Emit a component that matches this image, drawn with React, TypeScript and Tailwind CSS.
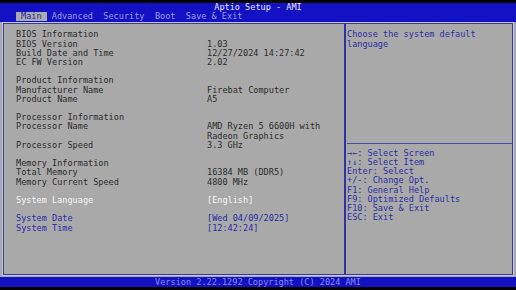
import React from 'react';

type Row = { label: string; value?: string[]; tone?: 'head' | 'item' | 'sel' | 'link' } | null;

const rows: Row[] = [
  { label: 'BIOS Information', tone: 'head' },
  { label: 'BIOS Version', value: ['1.03'] },
  { label: 'Build Date and Time', value: ['12/27/2024 14:27:42'] },
  { label: 'EC FW Version', value: ['2.02'] },
  null,
  { label: 'Product Information', tone: 'head' },
  { label: 'Manufacturer Name', value: ['Firebat Computer'] },
  { label: 'Product Name', value: ['A5'] },
  null,
  { label: 'Processor Information', tone: 'head' },
  { label: 'Processor Name', value: ['AMD Ryzen 5 6600H with', 'Radeon Graphics'] },
  { label: 'Processor Speed', value: ['3.3 GHz'] },
  null,
  { label: 'Memory Information', tone: 'head' },
  { label: 'Total Memory', value: ['16384 MB (DDR5)'] },
  { label: 'Memory Current Speed', value: ['4800 MHz'] },
  null,
  { label: 'System Language', value: ['[English]'], tone: 'sel' },
  null,
  { label: 'System Date', value: ['[Wed 04/09/2025]'], tone: 'link' },
  { label: 'System Time', value: ['[12:42:24]'], tone: 'link' },
];

const keys = [
  '\u2192\u2190: Select Screen',
  '\u2191\u2193: Select Item',
  'Enter: Select',
  '+/-: Change Opt.',
  'F1: General Help',
  'F9: Optimized Defaults',
  'F10: Save & Exit',
  'ESC: Exit',
];

const tabs = ['Main', 'Advanced', 'Security', 'Boot', 'Save & Exit'];

const toneClass = (tone?: string) =>
  tone === 'sel' ? 'text-[#f4f4f4]' : tone === 'link' ? 'text-[#2a2aa6]' : 'text-[#2c2c2c]';

export default function App() {
  return (
    <div
      className="w-[516px] h-[290px] bg-black flex flex-col overflow-hidden text-[8.55px] leading-[9.2px] whitespace-pre"
      style={{ fontFamily: '"DejaVu Sans Mono", "Liberation Mono", monospace' }}
    >
      <div className="h-[3px] shrink-0" />

      {/* header */}
      <div className="h-[19px] shrink-0 bg-[#1212c4] flex flex-col">
        <div className="h-[8px] leading-[8px] text-center text-[#e8e8ff]">Aptio Setup - AMI</div>
        <div className="mt-[1px] flex pl-[16px]">
          {tabs.map((t, i) => (
            <div
              key={t}
              className={
                i === 0
                  ? 'h-[9px] leading-[9px] px-[5px] bg-[#ababab] text-[#2a2aa6]'
                  : 'h-[9px] leading-[9px] px-[5.2px] text-[#9c9ce4]'
              }
            >
              {t}
            </div>
          ))}
        </div>
      </div>

      {/* body */}
      <div className="h-[255px] shrink-0 bg-[#a9a9a9] px-[2px] pb-[1px]">
        <div className="h-full border border-[#c6c6dc]">
          <div className="h-full border border-[#3a3aa4] flex">
            <div className="w-[340px] pl-[12px] pt-[6.4px]">
              {rows.map((r, i) =>
                r === null ? (
                  <div key={i} className="h-[9.2px]" />
                ) : (
                  <div key={i} className={'flex ' + toneClass(r.tone)}>
                    <div className="w-[191px]">{r.label}</div>
                    <div>
                      {(r.value ?? []).map((v) => (
                        <div key={v}>{v}</div>
                      ))}
                    </div>
                  </div>
                ),
              )}
            </div>
            <div className="w-[2px] bg-[#3232a0]" />
            <div className="flex-1 flex flex-col text-[#2e2ea4]">
              <div className="h-[119px] pl-[1px] pt-[6.4px]">
                <div>Choose the system default</div>
                <div>language</div>
              </div>
              <div className="h-[1px] bg-[#4a4aae] ml-[1px]" />
              <div className="pl-[1px] pt-[4.7px]">
                {keys.map((k) => (
                  <div key={k}>{k}</div>
                ))}
              </div>
            </div>
          </div>
        </div>
      </div>

      {/* footer */}
      <div className="h-[10px] shrink-0 bg-[#1212c4] text-center leading-[10px] text-[#8a8aee]">
        Version 2.22.1292 Copyright (C) 2024 AMI
      </div>
      <div className="h-[3px] shrink-0" />
    </div>
  );
}
